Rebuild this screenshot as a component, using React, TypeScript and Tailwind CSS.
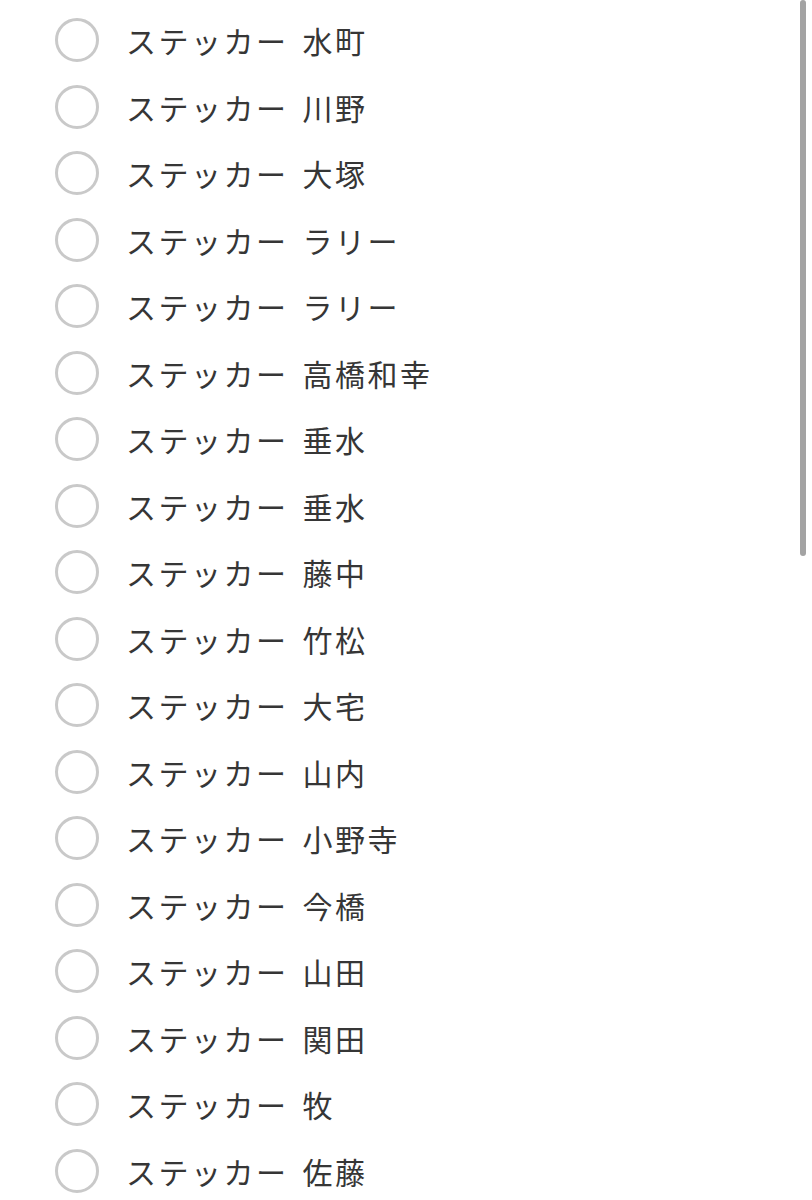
const names = [
  "水町",
  "川野",
  "大塚",
  "ラリー",
  "ラリー",
  "高橋和幸",
  "垂水",
  "垂水",
  "藤中",
  "竹松",
  "大宅",
  "山内",
  "小野寺",
  "今橋",
  "山田",
  "関田",
  "牧",
  "佐藤",
];

export default function App() {
  return (
    <div
      className="relative h-[1200px] w-[812px] overflow-hidden bg-white"
      style={{ fontFamily: '"Noto Sans CJK JP", "Noto Sans", sans-serif' }}
    >
      <ul className="pt-[7px]">
        {names.map((name, i) => (
          <li key={i} className="flex h-[66.5px] items-center pl-[55px]">
            <span className="h-[44px] w-[44px] shrink-0 rounded-full border-[3px] border-[#c9c9c9]" />
            <span className="ml-[27px] text-[30px] leading-none tracking-[2.5px] text-[#363636]">
              ステッカー<span className="inline-block w-[14px]" />{name}
            </span>
          </li>
        ))}
      </ul>
      {/* scroll bar */}
      <div className="absolute right-[6px] top-0 h-[556px] w-[6px] rounded-full bg-[#a3a3a3]" />
    </div>
  );
}
